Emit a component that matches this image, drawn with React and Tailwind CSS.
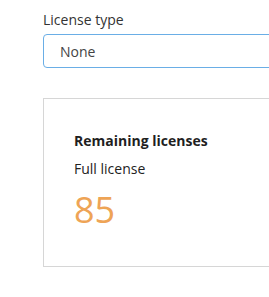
export default function App() {
  return (
    <div className="w-[269px] h-[297px] overflow-hidden bg-white pl-[43px] pt-[10px] font-['Open_Sans',sans-serif] text-[#333]">
      {/* License type select */}
      <div className="text-[14px] leading-[20px]">License type</div>
      <div className="mt-[4px] w-[300px] h-[34px] flex items-center pl-4 border border-[#6aaee6] rounded-[4px] text-[14px] text-[#444]">
        None
      </div>

      {/* Remaining licenses card */}
      <div className="mt-[30px] w-[300px] border border-[#d6d6d6] pt-[32px] pl-[30px] pb-[38px]">
        <div className="text-[14px] leading-[20px] font-bold text-[#1f1f1f]">
          Remaining licenses
        </div>
        <div className="mt-[8px] text-[14px] leading-[20px] text-[#222]">Full license</div>
        <div className="mt-[13px] text-[36px] leading-[36px] text-[#eea456]">85</div>
      </div>
    </div>
  );
}
